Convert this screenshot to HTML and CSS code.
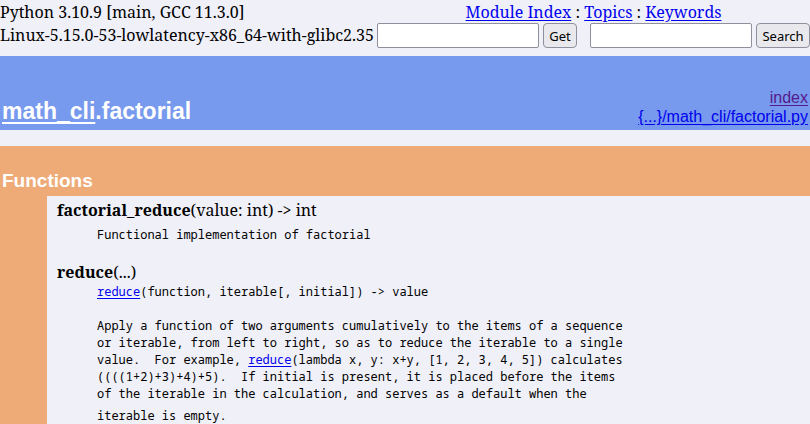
FILE: index.html
```html
<!DOCTYPE html>
<html lang="en">
<head>
<meta charset="utf-8">
<title>Pydoc: module math_cli.factorial</title>
<link rel="stylesheet" href="styles.css">
</head>
<body>
<header class="topbar">
  <div class="version">Python 3.10.9 [main, GCC 11.3.0]<br>Linux-5.15.0-53-lowlatency-x86_64-with-glibc2.35</div>
  <div class="tools">
    <nav class="nav"><a href="index.html">Module Index</a> : <a href="topics.html">Topics</a> : <a href="keywords.html">Keywords</a></nav>
    <div class="forms">
      <form class="form" action="get"><input class="field" type="text" name="key" aria-label="Topic"><button class="button button-get" type="submit">Get</button></form>
      <form class="form" action="search"><input class="field" type="text" name="key" aria-label="Search term"><button class="button button-search" type="submit">Search</button></form>
    </div>
  </div>
</header>
<main>
  <div class="heading">
    <h1 class="title"><a class="title-link" href="math_cli.html">math_cli</a>.factorial</h1>
    <div class="location"><a class="visited" href=".">index</a><br><a href="file:factorial.py">{...}/math_cli/factorial.py</a></div>
  </div>
  <section class="functions">
    <h2 class="section-title">Functions</h2>
    <dl class="content">
      <dt class="signature"><strong>factorial_reduce</strong>(value: int) -&gt; int</dt>
      <dd class="doc"><p class="text">Functional implementation of factorial</p></dd>
      <dt class="signature" id="reduce"><strong>reduce</strong>(...)</dt>
      <dd class="doc doc-long"><pre class="text"><a href="#reduce">reduce</a>(function, iterable[, initial]) -&gt; value

Apply a function of two arguments cumulatively to the items of a sequence
or iterable, from left to right, so as to reduce the iterable to a single
value.  For example, <a href="#reduce">reduce</a>(lambda x, y: x+y, [1, 2, 3, 4, 5]) calculates
((((1+2)+3)+4)+5).  If initial is present, it is placed before the items
of the iterable in the calculation, and serves as a default when the</pre>
<p class="text last">iterable is empty.</p></dd>
    </dl>
  </section>
</main>
</body>
</html>
```

FILE: styles.css
```css
* { box-sizing: border-box; }
body {
  margin: 0;
  background: #f0f0f8;
  color: #000;
  font: 16px/23px "Noto Serif", "Noto Sans", serif;
}
a { color: #0000ee; text-underline-offset: 2px; }
.visited { color: #551a8b; }
.topbar {
  display: flex;
  justify-content: space-between;
  padding-top: 1px;
  min-height: 56px;
  white-space: nowrap;
}
.nav { text-align: center; height: 22px; }
.forms { display: flex; gap: 13px; }
.form { display: flex; gap: 4px; margin: 0; }
.field {
  width: 162px;
  height: 25px;
  border: 1px solid #8f8f9d;
  border-radius: 2px;
  background: #fff;
}
.button {
  height: 25px;
  padding: 0 5px;
  border: 1px solid #8f8f9d;
  border-radius: 4px;
  background: #e9e9ed;
  color: #000;
  font: 13px "Noto Sans", sans-serif;
}
.button-get { min-width: 34px; }
.button-search { min-width: 54px; }
.heading {
  display: flex;
  justify-content: space-between;
  align-items: flex-end;
  min-height: 74px;
  padding: 2px 2px 4px;
  margin-bottom: 16px;
  background: #7799ee;
  font-family: "Liberation Sans", sans-serif;
}
.title { margin: 0; padding-bottom: 1px; color: #fff; font-size: 23px; line-height: 28px; }
.title-link { color: #fff; text-decoration-thickness: 2px; text-underline-offset: 3px; }
.location { font-size: 16px; line-height: 19px; text-align: right; }
.functions { background: #eeaa77; }
.section-title {
  margin: 0;
  padding: 23px 2px 4px;
  color: #fff;
  font: bold 19px/23px "Liberation Sans", sans-serif;
}
.content { margin: 0 0 0 47px; padding: 3px 10px; background: #f0f0f8; }
.signature { line-height: 22px; }
.doc { margin: 5px 0 18px 40px; }
.doc-long { margin-top: 0; }
.text { margin: 0; font: 12px/17px "Noto Sans Mono", "Noto Mono", "DejaVu Sans Mono", monospace; }
.last { margin-top: 5px; }
```
